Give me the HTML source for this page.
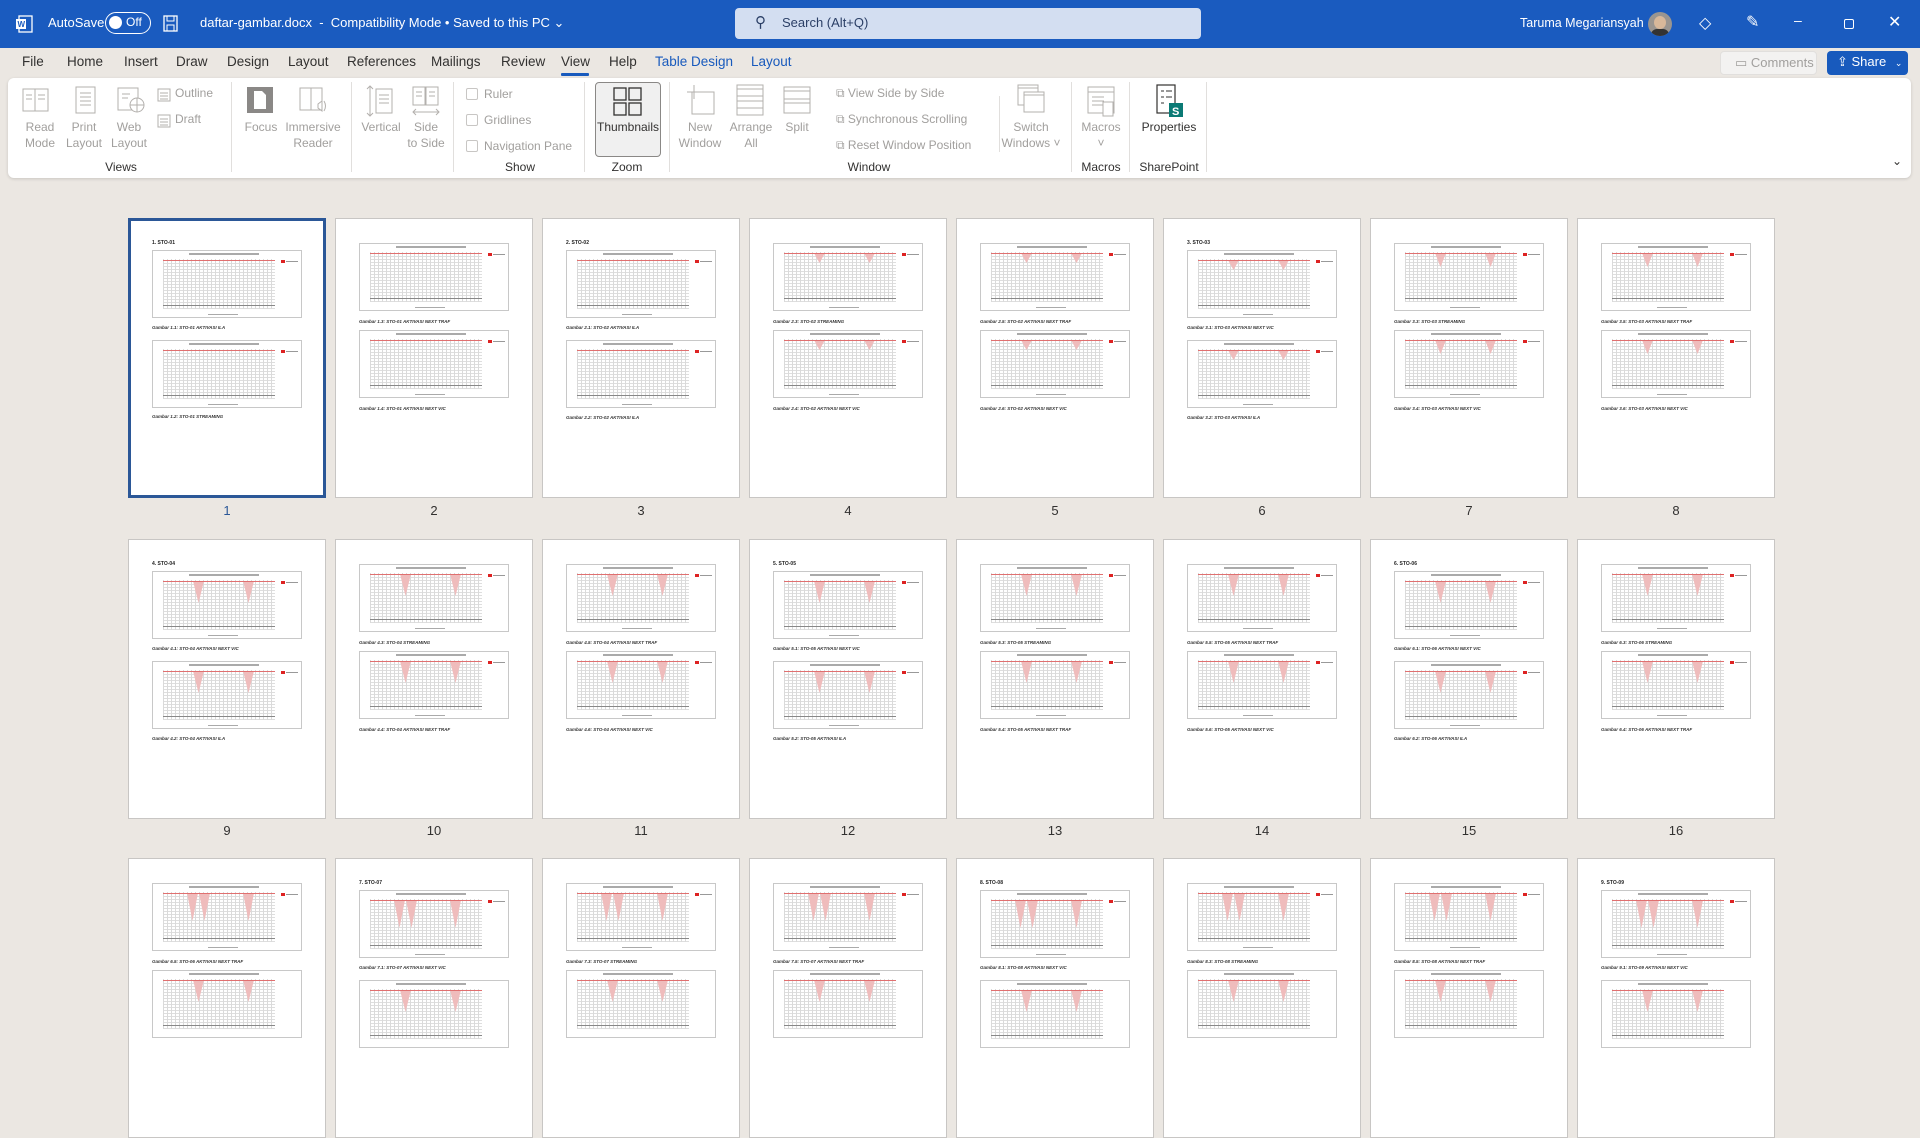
<!DOCTYPE html>
<html><head><meta charset="utf-8"><style>
*{box-sizing:border-box;margin:0;padding:0}
body{width:1920px;height:1010px;overflow:hidden;background:#ebe7e2;font-family:"Segoe UI","Liberation Sans",sans-serif;position:relative;color:#323130}
.a{position:absolute;white-space:nowrap}
#tb{position:absolute;left:0;top:0;width:1920px;height:48px;background:#1a5bbf;color:#fff;font-size:13px}
.tab{position:absolute;top:54px;font-size:13.5px;color:#323130}
#rib{position:absolute;left:8px;top:78px;width:1903px;height:100px;background:#fff;border-radius:6px;box-shadow:0 1px 3px rgba(0,0,0,.15)}
.lb{position:absolute;font-size:12px;color:#a19f9d;text-align:center;line-height:16px;white-space:nowrap;transform:translateX(-50%)}
.gl{position:absolute;top:82px;font-size:12px;color:#323130;transform:translateX(-50%);white-space:nowrap}
.sep{position:absolute;top:4px;width:1px;height:90px;background:#e1dfdd}
.sm{position:absolute;font-size:12px;color:#a19f9d;white-space:nowrap}
.cb{display:inline-block;width:12px;height:12px;border:1px solid #c8c6c4;border-radius:2px;vertical-align:-2px;margin-right:6px}
.ic{position:absolute}
.pg{position:absolute;width:198px;height:280px;background:#fff;border:1px solid #c8c6c4}
.pg.sel{border:3px solid #2b5797}
.c{position:absolute;left:23px;width:150px;height:68px;border:1px solid #c8c8c8}
.c .p{position:absolute;left:10px;top:8px;width:112px;height:50px;background:repeating-linear-gradient(90deg,#dadada 0 1px,transparent 1px 4px),repeating-linear-gradient(0deg,#dedede 0 1px,transparent 1px 3px)}
.c .p::after{content:"";position:absolute;left:0;right:0;bottom:3px;height:1px;background:#888}
.c .r{position:absolute;left:10px;top:9px;width:112px;height:1px;background:#e07070;z-index:2}
.c .lg{position:absolute;left:128px;top:9px;width:4px;height:3px;background:#d22}
.c .lg2{position:absolute;left:133px;top:10px;width:12px;height:1px;background:#999}
.c .t{position:absolute;left:36px;top:2px;width:70px;height:2px;background:#aaa}
.c .x{position:absolute;left:55px;top:63px;width:30px;height:1px;background:#aaa}
.c .v{position:absolute;top:9px;width:11px;height:22px;background:#efbcbc;clip-path:polygon(0 0,100% 0,50% 100%);transform:translateX(4px)}
.cap{position:absolute;left:23px;font-size:4.5px;font-weight:bold;font-style:italic;color:#333}
.h{position:absolute;left:23px;top:21px;font-size:5px;font-weight:bold;color:#222}
.num{position:absolute;font-size:13px;color:#323130;transform:translateX(-50%)}
</style></head><body>

<div id="tb">
 <svg class="a" style="left:15px;top:15px" width="18" height="18" viewBox="0 0 18 18"><rect x="4" y="1" width="13" height="16" fill="none" stroke="#fff" stroke-width="1.3"/><rect x="1" y="4" width="10" height="10" fill="#fff"/><text x="2.5" y="12" font-size="8" font-weight="bold" fill="#1a5bbf" font-family="Liberation Sans">W</text></svg>
 <span class="a" style="left:48px;top:15px">AutoSave</span>
 <div class="a" style="left:105px;top:12px;width:46px;height:22px;border:1.5px solid #fff;border-radius:11px"><div style="position:absolute;left:3px;top:3px;width:13px;height:13px;border-radius:50%;background:#fff"></div><span style="position:absolute;left:20px;top:2px;font-size:12px">Off</span></div>
 <svg class="a" style="left:163px;top:15px" width="16" height="17"><rect x="1" y="1" width="13" height="15" fill="none" stroke="#fff" stroke-width="1.3"/><rect x="4" y="1" width="7" height="5" fill="none" stroke="#fff"/><rect x="4" y="10" width="7" height="6" fill="none" stroke="#fff"/></svg>
 <span class="a" style="left:200px;top:15px">daftar-gambar.docx&nbsp; -&nbsp; Compatibility Mode • Saved to this PC ⌄</span>
 <div class="a" style="left:735px;top:8px;width:466px;height:31px;background:#d3def1;border-radius:4px;color:#2b3f66"><span style="position:absolute;left:20px;top:5px;font-size:15px;transform:scaleX(-1)">⚲</span><span style="position:absolute;left:47px;top:7px">Search (Alt+Q)</span></div>
 <span class="a" style="left:1520px;top:16px;font-size:12.5px">Taruma Megariansyah</span>
 <div class="a" style="left:1648px;top:12px;width:24px;height:24px;border-radius:50%;background:#9a9590;overflow:hidden"><div style="position:absolute;left:6px;top:4px;width:12px;height:13px;border-radius:50%;background:#d8b89a"></div><div style="position:absolute;left:3px;top:17px;width:18px;height:10px;background:#333;border-radius:6px 6px 0 0"></div></div>
 <span class="a" style="left:1699px;top:13px;font-size:16px">◇</span>
 <span class="a" style="left:1746px;top:12px;font-size:16px">✎</span>
 <span class="a" style="left:1794px;top:12px;font-size:14px">–</span>
 <div class="a" style="left:1844px;top:19px;width:10px;height:10px;border:1.2px solid #fff;border-radius:2px"></div>
 <span class="a" style="left:1888px;top:12px;font-size:16px">✕</span>
</div>

<span class="tab" style="left:22px">File</span>
<span class="tab" style="left:67px">Home</span>
<span class="tab" style="left:124px">Insert</span>
<span class="tab" style="left:176px">Draw</span>
<span class="tab" style="left:227px">Design</span>
<span class="tab" style="left:288px">Layout</span>
<span class="tab" style="left:347px">References</span>
<span class="tab" style="left:431px">Mailings</span>
<span class="tab" style="left:501px">Review</span>
<span class="tab" style="left:561px">View</span>
<div class="a" style="left:561px;top:73px;width:28px;height:3px;background:#185abd;border-radius:1px"></div>
<span class="tab" style="left:609px">Help</span>
<span class="tab" style="left:655px;color:#185abd">Table Design</span>
<span class="tab" style="left:751px;color:#185abd">Layout</span>

<div class="a" style="left:1720px;top:51px;width:97px;height:24px;border:1px solid #e1dfdd;border-radius:4px;background:#f3f2f1;color:#a19f9d;font-size:13px;padding:3px 0 0 14px">▭ Comments</div>
<div class="a" style="left:1827px;top:51px;width:81px;height:24px;border-radius:4px;background:#185abd;color:#fff;font-size:13px;padding:3px 0 0 10px">⇪ Share <span style="font-size:9px;margin-left:5px">⌄</span></div>

<div id="rib">
 <svg class="ic" style="left:14px;top:8px" width="28" height="28"><rect x="1" y="3" width="12" height="22" fill="none" stroke="#b3b0ad"/><rect x="13" y="3" width="13" height="22" fill="none" stroke="#b3b0ad"/><path d="M4 9h6M4 13h6M16 9h7M16 13h7" stroke="#b3b0ad"/></svg>
 <div class="lb" style="left:32px;top:41px">Read<br>Mode</div>
 <svg class="ic" style="left:66px;top:8px" width="24" height="28"><rect x="2" y="1" width="19" height="26" fill="none" stroke="#b3b0ad"/><path d="M6 7h11M6 11h11M6 15h11M6 19h11" stroke="#b3b0ad"/></svg>
 <div class="lb" style="left:76px;top:41px">Print<br>Layout</div>
 <svg class="ic" style="left:108px;top:8px" width="30" height="28"><rect x="2" y="2" width="20" height="22" fill="none" stroke="#b3b0ad"/><path d="M6 8h8M6 12h6" stroke="#b3b0ad"/><circle cx="21" cy="19" r="7" fill="#fff" stroke="#b3b0ad"/><path d="M14 19h14M21 12v14" stroke="#b3b0ad"/></svg>
 <div class="lb" style="left:121px;top:41px">Web<br>Layout</div>
 <svg class="ic" style="left:149px;top:10px" width="14" height="14"><rect x="1" y="1" width="12" height="12" fill="none" stroke="#b3b0ad"/><path d="M3 5h8M3 8h8M3 11h8" stroke="#b3b0ad"/></svg>
 <span class="sm" style="left:167px;top:8px">Outline</span>
 <svg class="ic" style="left:149px;top:36px" width="14" height="14"><rect x="1" y="1" width="12" height="12" fill="none" stroke="#b3b0ad"/><path d="M3 5h8M3 8h8M3 11h8" stroke="#b3b0ad"/></svg>
 <span class="sm" style="left:167px;top:34px">Draft</span>
 <div class="gl" style="left:113px">Views</div>
 <div class="sep" style="left:223px"></div>
 <svg class="ic" style="left:238px;top:8px" width="28" height="28"><rect x="1" y="1" width="26" height="26" fill="#8a8886"/><path d="M8 5h8l4 4v14H8z" fill="#fff"/></svg>
 <div class="lb" style="left:253px;top:41px">Focus</div>
 <svg class="ic" style="left:290px;top:8px" width="30" height="30"><rect x="2" y="2" width="11" height="22" fill="none" stroke="#b3b0ad"/><rect x="13" y="2" width="11" height="22" fill="none" stroke="#b3b0ad"/><path d="M20 18l4-3v10l-4-3z M26 15q3 5 0 10" fill="none" stroke="#b3b0ad"/></svg>
 <div class="lb" style="left:305px;top:41px">Immersive<br>Reader</div>
 <div class="sep" style="left:343px"></div>
 <svg class="ic" style="left:358px;top:6px" width="28" height="34"><path d="M4 2v30M1 5l3-3 3 3M1 29l3 3 3-3" fill="none" stroke="#b3b0ad"/><rect x="10" y="5" width="16" height="24" fill="none" stroke="#b3b0ad"/><path d="M13 11h10M13 15h10M13 19h10" stroke="#b3b0ad"/></svg>
 <div class="lb" style="left:373px;top:41px">Vertical</div>
 <svg class="ic" style="left:403px;top:8px" width="30" height="30"><rect x="2" y="1" width="12" height="18" fill="none" stroke="#b3b0ad"/><rect x="15" y="1" width="12" height="18" fill="none" stroke="#b3b0ad"/><path d="M5 6h6M5 10h6M18 6h6M18 10h6M2 26h26M5 23l-3 3 3 3M25 23l3 3-3 3" fill="none" stroke="#b3b0ad"/></svg>
 <div class="lb" style="left:418px;top:41px">Side<br>to Side</div>
 <div class="sep" style="left:445px"></div>
 <span class="sm" style="left:458px;top:9px"><span class="cb"></span>Ruler</span>
 <span class="sm" style="left:458px;top:35px"><span class="cb"></span>Gridlines</span>
 <span class="sm" style="left:458px;top:61px"><span class="cb"></span>Navigation Pane</span>
 <div class="gl" style="left:512px">Show</div>
 <div class="sep" style="left:576px"></div>
 <div class="a" style="left:587px;top:4px;width:66px;height:75px;background:#f0f0f0;border:1px solid #8a8886;border-radius:4px"></div>
 <svg class="ic" style="left:605px;top:9px" width="30" height="30"><rect x="1" y="1" width="12" height="12" fill="none" stroke="#323130" stroke-width="1.3"/><rect x="16" y="1" width="12" height="12" fill="none" stroke="#323130" stroke-width="1.3"/><rect x="1" y="16" width="12" height="12" fill="none" stroke="#323130" stroke-width="1.3"/><rect x="16" y="16" width="12" height="12" fill="none" stroke="#323130" stroke-width="1.3"/></svg>
 <div class="lb" style="left:620px;top:41px;color:#323130">Thumbnails</div>
 <div class="gl" style="left:619px">Zoom</div>
 <div class="sep" style="left:661px"></div>
 <svg class="ic" style="left:678px;top:6px" width="30" height="32"><rect x="6" y="8" width="22" height="22" fill="none" stroke="#b3b0ad"/><path d="M8 1v14M1 8h14" stroke="#b3b0ad"/></svg>
 <div class="lb" style="left:692px;top:41px">New<br>Window</div>
 <svg class="ic" style="left:728px;top:6px" width="28" height="32"><rect x="1" y="1" width="26" height="30" fill="none" stroke="#b3b0ad"/><path d="M1 5h26M1 12h26M1 17h26M1 24h26" stroke="#b3b0ad"/></svg>
 <div class="lb" style="left:743px;top:41px">Arrange<br>All</div>
 <svg class="ic" style="left:775px;top:8px" width="28" height="28"><rect x="1" y="1" width="26" height="26" fill="none" stroke="#b3b0ad"/><path d="M1 5h26M1 13h26M1 17h26" stroke="#b3b0ad"/></svg>
 <div class="lb" style="left:789px;top:41px">Split</div>
 <span class="sm" style="left:828px;top:8px">⧉ View Side by Side</span>
 <span class="sm" style="left:828px;top:34px">⧉ Synchronous Scrolling</span>
 <span class="sm" style="left:828px;top:60px">⧉ Reset Window Position</span>
 <div class="sep" style="left:991px;top:18px;height:56px"></div>
 <svg class="ic" style="left:1007px;top:6px" width="30" height="34"><rect x="3" y="1" width="20" height="20" fill="none" stroke="#b3b0ad"/><rect x="9" y="8" width="20" height="20" fill="#fff" stroke="#b3b0ad"/><path d="M3 4h20M9 11h20" stroke="#b3b0ad"/></svg>
 <div class="lb" style="left:1023px;top:41px">Switch<br>Windows ˅</div>
 <div class="gl" style="left:861px">Window</div>
 <div class="sep" style="left:1063px"></div>
 <svg class="ic" style="left:1079px;top:8px" width="30" height="34"><rect x="1" y="1" width="26" height="26" fill="none" stroke="#b3b0ad"/><path d="M1 6h26M5 11h12M5 15h12M5 19h12" stroke="#b3b0ad"/><rect x="16" y="16" width="10" height="14" fill="#fff" stroke="#b3b0ad"/></svg>
 <div class="lb" style="left:1093px;top:41px">Macros<br>˅</div>
 <div class="gl" style="left:1093px">Macros</div>
 <div class="sep" style="left:1121px"></div>
 <svg class="ic" style="left:1147px;top:6px" width="30" height="34"><rect x="2" y="1" width="18" height="28" fill="none" stroke="#323130" stroke-width="1.2"/><path d="M6 7h3M11 7h6M6 13h3M11 13h6M6 19h3" stroke="#323130"/><rect x="14" y="19" width="14" height="14" fill="#0b7a75"/><text x="17" y="31" font-size="11" font-weight="bold" fill="#fff" font-family="Liberation Sans">S</text></svg>
 <div class="lb" style="left:1161px;top:41px;color:#323130">Properties</div>
 <div class="gl" style="left:1161px">SharePoint</div>
 <div class="sep" style="left:1198px"></div>
 <span class="a" style="left:1884px;top:76px;font-size:12px;color:#323130">⌄</span>
</div>

<!-- ROW 1 -->
<div class="pg sel" style="left:128px;top:218px"><b class="h" style="left:21px;top:19px">1. STO-01</b>
 <div class="c" style="left:21px;top:29px"><i class="p"></i><i class="t"></i><i class="r"></i><i class="lg"></i><i class="lg2"></i><i class="x"></i></div><span class="cap" style="left:21px;top:104px">Gambar 1.1: STO-01 AKTIVASI ILA</span>
 <div class="c" style="left:21px;top:119px"><i class="p"></i><i class="t"></i><i class="r"></i><i class="lg"></i><i class="lg2"></i><i class="x"></i></div><span class="cap" style="left:21px;top:193px">Gambar 1.2: STO-01 STREAMING</span></div>
<div class="pg" style="left:335px;top:218px">
 <div class="c" style="top:24px"><i class="p"></i><i class="t"></i><i class="r"></i><i class="lg"></i><i class="lg2"></i><i class="x"></i></div><span class="cap" style="top:100px">Gambar 1.3: STO-01 AKTIVASI NEXT TRAF</span>
 <div class="c" style="top:111px"><i class="p"></i><i class="t"></i><i class="r"></i><i class="lg"></i><i class="lg2"></i><i class="x"></i></div><span class="cap" style="top:187px">Gambar 1.4: STO-01 AKTIVASI NEXT VIC</span></div>
<div class="pg" style="left:542px;top:218px"><b class="h">2. STO-02</b>
 <div class="c" style="top:31px"><i class="p"></i><i class="t"></i><i class="r"></i><i class="lg"></i><i class="lg2"></i><i class="x"></i></div><span class="cap" style="top:106px">Gambar 2.1: STO-02 AKTIVASI ILA</span>
 <div class="c" style="top:121px"><i class="p"></i><i class="t"></i><i class="r"></i><i class="lg"></i><i class="lg2"></i><i class="x"></i></div><span class="cap" style="top:196px">Gambar 2.2: STO-02 AKTIVASI ILA</span></div>
<div class="pg" style="left:749px;top:218px">
 <div class="c" style="top:24px"><i class="p"></i><i class="t"></i><i class="r"></i><i class="v" style="left:36px;height:10px"></i><i class="v" style="left:86px;height:10px"></i><i class="lg"></i><i class="lg2"></i><i class="x"></i></div><span class="cap" style="top:100px">Gambar 2.3: STO-02 STREAMING</span>
 <div class="c" style="top:111px"><i class="p"></i><i class="t"></i><i class="r"></i><i class="v" style="left:36px;height:10px"></i><i class="v" style="left:86px;height:10px"></i><i class="lg"></i><i class="lg2"></i><i class="x"></i></div><span class="cap" style="top:187px">Gambar 2.4: STO-02 AKTIVASI NEXT VIC</span></div>
<div class="pg" style="left:956px;top:218px">
 <div class="c" style="top:24px"><i class="p"></i><i class="t"></i><i class="r"></i><i class="v" style="left:36px;height:10px"></i><i class="v" style="left:86px;height:10px"></i><i class="lg"></i><i class="lg2"></i><i class="x"></i></div><span class="cap" style="top:100px">Gambar 2.5: STO-02 AKTIVASI NEXT TRAF</span>
 <div class="c" style="top:111px"><i class="p"></i><i class="t"></i><i class="r"></i><i class="v" style="left:36px;height:10px"></i><i class="v" style="left:86px;height:10px"></i><i class="lg"></i><i class="lg2"></i><i class="x"></i></div><span class="cap" style="top:187px">Gambar 2.6: STO-02 AKTIVASI NEXT VIC</span></div>
<div class="pg" style="left:1163px;top:218px"><b class="h">3. STO-03</b>
 <div class="c" style="top:31px"><i class="p"></i><i class="t"></i><i class="r"></i><i class="v" style="left:36px;height:10px"></i><i class="v" style="left:86px;height:10px"></i><i class="lg"></i><i class="lg2"></i><i class="x"></i></div><span class="cap" style="top:106px">Gambar 3.1: STO-03 AKTIVASI NEXT VIC</span>
 <div class="c" style="top:121px"><i class="p"></i><i class="t"></i><i class="r"></i><i class="v" style="left:36px;height:10px"></i><i class="v" style="left:86px;height:10px"></i><i class="lg"></i><i class="lg2"></i><i class="x"></i></div><span class="cap" style="top:196px">Gambar 3.2: STO-03 AKTIVASI ILA</span></div>
<div class="pg" style="left:1370px;top:218px">
 <div class="c" style="top:24px"><i class="p"></i><i class="t"></i><i class="r"></i><i class="v" style="left:36px;height:14px"></i><i class="v" style="left:86px;height:14px"></i><i class="lg"></i><i class="lg2"></i><i class="x"></i></div><span class="cap" style="top:100px">Gambar 3.3: STO-03 STREAMING</span>
 <div class="c" style="top:111px"><i class="p"></i><i class="t"></i><i class="r"></i><i class="v" style="left:36px;height:14px"></i><i class="v" style="left:86px;height:14px"></i><i class="lg"></i><i class="lg2"></i><i class="x"></i></div><span class="cap" style="top:187px">Gambar 3.4: STO-03 AKTIVASI NEXT VIC</span></div>
<div class="pg" style="left:1577px;top:218px">
 <div class="c" style="top:24px"><i class="p"></i><i class="t"></i><i class="r"></i><i class="v" style="left:36px;height:14px"></i><i class="v" style="left:86px;height:14px"></i><i class="lg"></i><i class="lg2"></i><i class="x"></i></div><span class="cap" style="top:100px">Gambar 3.5: STO-03 AKTIVASI NEXT TRAF</span>
 <div class="c" style="top:111px"><i class="p"></i><i class="t"></i><i class="r"></i><i class="v" style="left:36px;height:14px"></i><i class="v" style="left:86px;height:14px"></i><i class="lg"></i><i class="lg2"></i><i class="x"></i></div><span class="cap" style="top:187px">Gambar 3.6: STO-03 AKTIVASI NEXT VIC</span></div>
<span class="num" style="left:227px;top:503px;color:#2b5797">1</span><span class="num" style="left:434px;top:503px">2</span><span class="num" style="left:641px;top:503px">3</span><span class="num" style="left:848px;top:503px">4</span><span class="num" style="left:1055px;top:503px">5</span><span class="num" style="left:1262px;top:503px">6</span><span class="num" style="left:1469px;top:503px">7</span><span class="num" style="left:1676px;top:503px">8</span>

<!-- ROW 2 -->
<div class="pg" style="left:128px;top:539px"><b class="h">4. STO-04</b>
 <div class="c" style="top:31px"><i class="p"></i><i class="t"></i><i class="r"></i><i class="v" style="left:36px"></i><i class="v" style="left:86px"></i><i class="lg"></i><i class="lg2"></i><i class="x"></i></div><span class="cap" style="top:106px">Gambar 4.1: STO-04 AKTIVASI NEXT VIC</span>
 <div class="c" style="top:121px"><i class="p"></i><i class="t"></i><i class="r"></i><i class="v" style="left:36px"></i><i class="v" style="left:86px"></i><i class="lg"></i><i class="lg2"></i><i class="x"></i></div><span class="cap" style="top:196px">Gambar 4.2: STO-04 AKTIVASI ILA</span></div>
<div class="pg" style="left:335px;top:539px">
 <div class="c" style="top:24px"><i class="p"></i><i class="t"></i><i class="r"></i><i class="v" style="left:36px"></i><i class="v" style="left:86px"></i><i class="lg"></i><i class="lg2"></i><i class="x"></i></div><span class="cap" style="top:100px">Gambar 4.3: STO-04 STREAMING</span>
 <div class="c" style="top:111px"><i class="p"></i><i class="t"></i><i class="r"></i><i class="v" style="left:36px"></i><i class="v" style="left:86px"></i><i class="lg"></i><i class="lg2"></i><i class="x"></i></div><span class="cap" style="top:187px">Gambar 4.4: STO-04 AKTIVASI NEXT TRAF</span></div>
<div class="pg" style="left:542px;top:539px">
 <div class="c" style="top:24px"><i class="p"></i><i class="t"></i><i class="r"></i><i class="v" style="left:36px"></i><i class="v" style="left:86px"></i><i class="lg"></i><i class="lg2"></i><i class="x"></i></div><span class="cap" style="top:100px">Gambar 4.5: STO-04 AKTIVASI NEXT TRAF</span>
 <div class="c" style="top:111px"><i class="p"></i><i class="t"></i><i class="r"></i><i class="v" style="left:36px"></i><i class="v" style="left:86px"></i><i class="lg"></i><i class="lg2"></i><i class="x"></i></div><span class="cap" style="top:187px">Gambar 4.6: STO-04 AKTIVASI NEXT VIC</span></div>
<div class="pg" style="left:749px;top:539px"><b class="h">5. STO-05</b>
 <div class="c" style="top:31px"><i class="p"></i><i class="t"></i><i class="r"></i><i class="v" style="left:36px"></i><i class="v" style="left:86px"></i><i class="lg"></i><i class="lg2"></i><i class="x"></i></div><span class="cap" style="top:106px">Gambar 5.1: STO-05 AKTIVASI NEXT VIC</span>
 <div class="c" style="top:121px"><i class="p"></i><i class="t"></i><i class="r"></i><i class="v" style="left:36px"></i><i class="v" style="left:86px"></i><i class="lg"></i><i class="lg2"></i><i class="x"></i></div><span class="cap" style="top:196px">Gambar 5.2: STO-05 AKTIVASI ILA</span></div>
<div class="pg" style="left:956px;top:539px">
 <div class="c" style="top:24px"><i class="p"></i><i class="t"></i><i class="r"></i><i class="v" style="left:36px"></i><i class="v" style="left:86px"></i><i class="lg"></i><i class="lg2"></i><i class="x"></i></div><span class="cap" style="top:100px">Gambar 5.3: STO-05 STREAMING</span>
 <div class="c" style="top:111px"><i class="p"></i><i class="t"></i><i class="r"></i><i class="v" style="left:36px"></i><i class="v" style="left:86px"></i><i class="lg"></i><i class="lg2"></i><i class="x"></i></div><span class="cap" style="top:187px">Gambar 5.4: STO-05 AKTIVASI NEXT TRAF</span></div>
<div class="pg" style="left:1163px;top:539px">
 <div class="c" style="top:24px"><i class="p"></i><i class="t"></i><i class="r"></i><i class="v" style="left:36px"></i><i class="v" style="left:86px"></i><i class="lg"></i><i class="lg2"></i><i class="x"></i></div><span class="cap" style="top:100px">Gambar 5.5: STO-05 AKTIVASI NEXT TRAF</span>
 <div class="c" style="top:111px"><i class="p"></i><i class="t"></i><i class="r"></i><i class="v" style="left:36px"></i><i class="v" style="left:86px"></i><i class="lg"></i><i class="lg2"></i><i class="x"></i></div><span class="cap" style="top:187px">Gambar 5.6: STO-05 AKTIVASI NEXT VIC</span></div>
<div class="pg" style="left:1370px;top:539px"><b class="h">6. STO-06</b>
 <div class="c" style="top:31px"><i class="p"></i><i class="t"></i><i class="r"></i><i class="v" style="left:36px"></i><i class="v" style="left:86px"></i><i class="lg"></i><i class="lg2"></i><i class="x"></i></div><span class="cap" style="top:106px">Gambar 6.1: STO-06 AKTIVASI NEXT VIC</span>
 <div class="c" style="top:121px"><i class="p"></i><i class="t"></i><i class="r"></i><i class="v" style="left:36px"></i><i class="v" style="left:86px"></i><i class="lg"></i><i class="lg2"></i><i class="x"></i></div><span class="cap" style="top:196px">Gambar 6.2: STO-06 AKTIVASI ILA</span></div>
<div class="pg" style="left:1577px;top:539px">
 <div class="c" style="top:24px"><i class="p"></i><i class="t"></i><i class="r"></i><i class="v" style="left:36px"></i><i class="v" style="left:86px"></i><i class="lg"></i><i class="lg2"></i><i class="x"></i></div><span class="cap" style="top:100px">Gambar 6.3: STO-06 STREAMING</span>
 <div class="c" style="top:111px"><i class="p"></i><i class="t"></i><i class="r"></i><i class="v" style="left:36px"></i><i class="v" style="left:86px"></i><i class="lg"></i><i class="lg2"></i><i class="x"></i></div><span class="cap" style="top:187px">Gambar 6.4: STO-06 AKTIVASI NEXT TRAF</span></div>
<span class="num" style="left:227px;top:823px">9</span><span class="num" style="left:434px;top:823px">10</span><span class="num" style="left:641px;top:823px">11</span><span class="num" style="left:848px;top:823px">12</span><span class="num" style="left:1055px;top:823px">13</span><span class="num" style="left:1262px;top:823px">14</span><span class="num" style="left:1469px;top:823px">15</span><span class="num" style="left:1676px;top:823px">16</span>

<!-- ROW 3 -->
<div class="pg" style="left:128px;top:858px">
 <div class="c" style="top:24px"><i class="p"></i><i class="t"></i><i class="r"></i><i class="v" style="left:30px;height:28px"></i><i class="v" style="left:42px;height:28px"></i><i class="v" style="left:86px;height:28px"></i><i class="lg"></i><i class="lg2"></i><i class="x"></i></div><span class="cap" style="top:100px">Gambar 6.5: STO-06 AKTIVASI NEXT TRAF</span>
 <div class="c" style="top:111px"><i class="p"></i><i class="t"></i><i class="r"></i><i class="v" style="left:36px"></i><i class="v" style="left:86px"></i></div></div>
<div class="pg" style="left:335px;top:858px"><b class="h">7. STO-07</b>
 <div class="c" style="top:31px"><i class="p"></i><i class="t"></i><i class="r"></i><i class="v" style="left:30px;height:28px"></i><i class="v" style="left:42px;height:28px"></i><i class="v" style="left:86px;height:28px"></i><i class="lg"></i><i class="lg2"></i><i class="x"></i></div><span class="cap" style="top:106px">Gambar 7.1: STO-07 AKTIVASI NEXT VIC</span>
 <div class="c" style="top:121px"><i class="p"></i><i class="t"></i><i class="r"></i><i class="v" style="left:36px"></i><i class="v" style="left:86px"></i></div></div>
<div class="pg" style="left:542px;top:858px">
 <div class="c" style="top:24px"><i class="p"></i><i class="t"></i><i class="r"></i><i class="v" style="left:30px;height:28px"></i><i class="v" style="left:42px;height:28px"></i><i class="v" style="left:86px;height:28px"></i><i class="lg"></i><i class="lg2"></i><i class="x"></i></div><span class="cap" style="top:100px">Gambar 7.3: STO-07 STREAMING</span>
 <div class="c" style="top:111px"><i class="p"></i><i class="t"></i><i class="r"></i><i class="v" style="left:36px"></i><i class="v" style="left:86px"></i></div></div>
<div class="pg" style="left:749px;top:858px">
 <div class="c" style="top:24px"><i class="p"></i><i class="t"></i><i class="r"></i><i class="v" style="left:30px;height:28px"></i><i class="v" style="left:42px;height:28px"></i><i class="v" style="left:86px;height:28px"></i><i class="lg"></i><i class="lg2"></i><i class="x"></i></div><span class="cap" style="top:100px">Gambar 7.5: STO-07 AKTIVASI NEXT TRAF</span>
 <div class="c" style="top:111px"><i class="p"></i><i class="t"></i><i class="r"></i><i class="v" style="left:36px"></i><i class="v" style="left:86px"></i></div></div>
<div class="pg" style="left:956px;top:858px"><b class="h">8. STO-08</b>
 <div class="c" style="top:31px"><i class="p"></i><i class="t"></i><i class="r"></i><i class="v" style="left:30px;height:28px"></i><i class="v" style="left:42px;height:28px"></i><i class="v" style="left:86px;height:28px"></i><i class="lg"></i><i class="lg2"></i><i class="x"></i></div><span class="cap" style="top:106px">Gambar 8.1: STO-08 AKTIVASI NEXT VIC</span>
 <div class="c" style="top:121px"><i class="p"></i><i class="t"></i><i class="r"></i><i class="v" style="left:36px"></i><i class="v" style="left:86px"></i></div></div>
<div class="pg" style="left:1163px;top:858px">
 <div class="c" style="top:24px"><i class="p"></i><i class="t"></i><i class="r"></i><i class="v" style="left:30px;height:28px"></i><i class="v" style="left:42px;height:28px"></i><i class="v" style="left:86px;height:28px"></i><i class="lg"></i><i class="lg2"></i><i class="x"></i></div><span class="cap" style="top:100px">Gambar 8.3: STO-08 STREAMING</span>
 <div class="c" style="top:111px"><i class="p"></i><i class="t"></i><i class="r"></i><i class="v" style="left:36px"></i><i class="v" style="left:86px"></i></div></div>
<div class="pg" style="left:1370px;top:858px">
 <div class="c" style="top:24px"><i class="p"></i><i class="t"></i><i class="r"></i><i class="v" style="left:30px;height:28px"></i><i class="v" style="left:42px;height:28px"></i><i class="v" style="left:86px;height:28px"></i><i class="lg"></i><i class="lg2"></i><i class="x"></i></div><span class="cap" style="top:100px">Gambar 8.5: STO-08 AKTIVASI NEXT TRAF</span>
 <div class="c" style="top:111px"><i class="p"></i><i class="t"></i><i class="r"></i><i class="v" style="left:36px"></i><i class="v" style="left:86px"></i></div></div>
<div class="pg" style="left:1577px;top:858px"><b class="h">9. STO-09</b>
 <div class="c" style="top:31px"><i class="p"></i><i class="t"></i><i class="r"></i><i class="v" style="left:30px;height:28px"></i><i class="v" style="left:42px;height:28px"></i><i class="v" style="left:86px;height:28px"></i><i class="lg"></i><i class="lg2"></i><i class="x"></i></div><span class="cap" style="top:106px">Gambar 9.1: STO-09 AKTIVASI NEXT VIC</span>
 <div class="c" style="top:121px"><i class="p"></i><i class="t"></i><i class="r"></i><i class="v" style="left:36px"></i><i class="v" style="left:86px"></i></div></div>
</body></html>
